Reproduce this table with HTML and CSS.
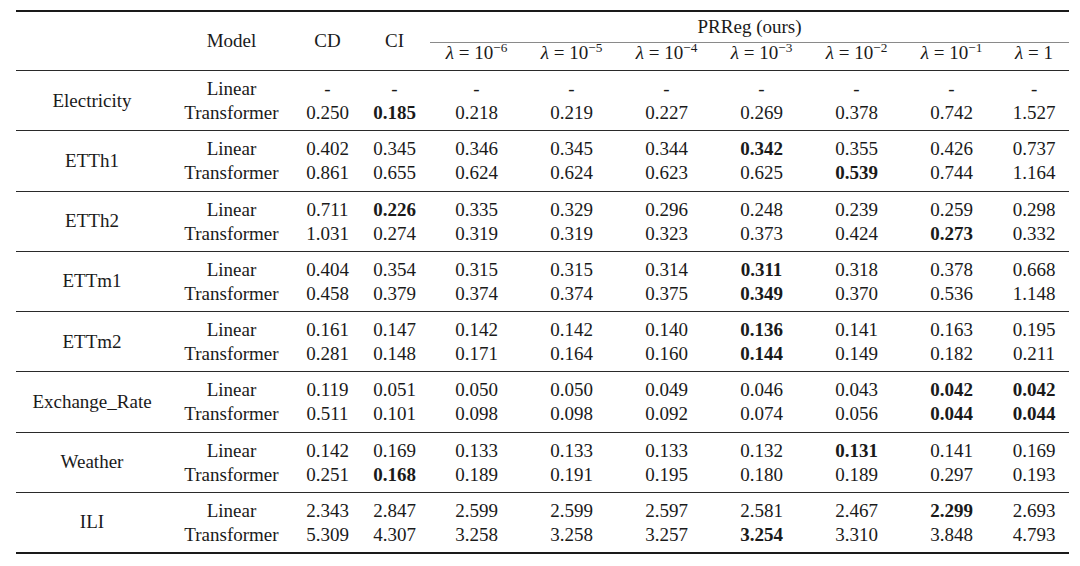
FILE: index.html
```html
<!DOCTYPE html>
<html>
<head>
<meta charset="utf-8">
<link rel="stylesheet" href="styles.css">
</head>
<body>
<table class="results">
  <colgroup>
    <col class="c-ds"><col class="c-model"><col class="c-cd"><col class="c-ci">
    <col class="c-l"><col class="c-l"><col class="c-l"><col class="c-l"><col class="c-l"><col class="c-l"><col class="c-l1">
  </colgroup>
  <thead>
    <tr class="h1">
      <th rowspan="2"></th>
      <th rowspan="2">Model</th>
      <th rowspan="2">CD</th>
      <th rowspan="2">CI</th>
      <th colspan="7" class="group-head"><span class="cmid">PRReg (ours)</span></th>
    </tr>
    <tr class="h2">
      <th><i>λ</i> = 10<sup>−6</sup></th>
      <th><i>λ</i> = 10<sup>−5</sup></th>
      <th><i>λ</i> = 10<sup>−4</sup></th>
      <th><i>λ</i> = 10<sup>−3</sup></th>
      <th><i>λ</i> = 10<sup>−2</sup></th>
      <th><i>λ</i> = 10<sup>−1</sup></th>
      <th><i>λ</i> = 1</th>
    </tr>
  </thead>
  <tbody>
    <tr class="r1"><td rowspan="2" class="ds">Electricity</td><td>Linear</td><td>-</td><td>-</td><td>-</td><td>-</td><td>-</td><td>-</td><td>-</td><td>-</td><td>-</td></tr>
    <tr class="r2"><td>Transformer</td><td>0.250</td><td><b>0.185</b></td><td>0.218</td><td>0.219</td><td>0.227</td><td>0.269</td><td>0.378</td><td>0.742</td><td>1.527</td></tr>
  </tbody>
  <tbody>
    <tr class="r1"><td rowspan="2" class="ds">ETTh1</td><td>Linear</td><td>0.402</td><td>0.345</td><td>0.346</td><td>0.345</td><td>0.344</td><td><b>0.342</b></td><td>0.355</td><td>0.426</td><td>0.737</td></tr>
    <tr class="r2"><td>Transformer</td><td>0.861</td><td>0.655</td><td>0.624</td><td>0.624</td><td>0.623</td><td>0.625</td><td><b>0.539</b></td><td>0.744</td><td>1.164</td></tr>
  </tbody>
  <tbody>
    <tr class="r1"><td rowspan="2" class="ds">ETTh2</td><td>Linear</td><td>0.711</td><td><b>0.226</b></td><td>0.335</td><td>0.329</td><td>0.296</td><td>0.248</td><td>0.239</td><td>0.259</td><td>0.298</td></tr>
    <tr class="r2"><td>Transformer</td><td>1.031</td><td>0.274</td><td>0.319</td><td>0.319</td><td>0.323</td><td>0.373</td><td>0.424</td><td><b>0.273</b></td><td>0.332</td></tr>
  </tbody>
  <tbody>
    <tr class="r1"><td rowspan="2" class="ds">ETTm1</td><td>Linear</td><td>0.404</td><td>0.354</td><td>0.315</td><td>0.315</td><td>0.314</td><td><b>0.311</b></td><td>0.318</td><td>0.378</td><td>0.668</td></tr>
    <tr class="r2"><td>Transformer</td><td>0.458</td><td>0.379</td><td>0.374</td><td>0.374</td><td>0.375</td><td><b>0.349</b></td><td>0.370</td><td>0.536</td><td>1.148</td></tr>
  </tbody>
  <tbody>
    <tr class="r1"><td rowspan="2" class="ds">ETTm2</td><td>Linear</td><td>0.161</td><td>0.147</td><td>0.142</td><td>0.142</td><td>0.140</td><td><b>0.136</b></td><td>0.141</td><td>0.163</td><td>0.195</td></tr>
    <tr class="r2"><td>Transformer</td><td>0.281</td><td>0.148</td><td>0.171</td><td>0.164</td><td>0.160</td><td><b>0.144</b></td><td>0.149</td><td>0.182</td><td>0.211</td></tr>
  </tbody>
  <tbody>
    <tr class="r1"><td rowspan="2" class="ds">Exchange_Rate</td><td>Linear</td><td>0.119</td><td>0.051</td><td>0.050</td><td>0.050</td><td>0.049</td><td>0.046</td><td>0.043</td><td><b>0.042</b></td><td><b>0.042</b></td></tr>
    <tr class="r2"><td>Transformer</td><td>0.511</td><td>0.101</td><td>0.098</td><td>0.098</td><td>0.092</td><td>0.074</td><td>0.056</td><td><b>0.044</b></td><td><b>0.044</b></td></tr>
  </tbody>
  <tbody>
    <tr class="r1"><td rowspan="2" class="ds">Weather</td><td>Linear</td><td>0.142</td><td>0.169</td><td>0.133</td><td>0.133</td><td>0.133</td><td>0.132</td><td><b>0.131</b></td><td>0.141</td><td>0.169</td></tr>
    <tr class="r2"><td>Transformer</td><td>0.251</td><td><b>0.168</b></td><td>0.189</td><td>0.191</td><td>0.195</td><td>0.180</td><td>0.189</td><td>0.297</td><td>0.193</td></tr>
  </tbody>
  <tbody>
    <tr class="r1"><td rowspan="2" class="ds">ILI</td><td>Linear</td><td>2.343</td><td>2.847</td><td>2.599</td><td>2.599</td><td>2.597</td><td>2.581</td><td>2.467</td><td><b>2.299</b></td><td>2.693</td></tr>
    <tr class="r2"><td>Transformer</td><td>5.309</td><td>4.307</td><td>3.258</td><td>3.258</td><td>3.257</td><td><b>3.254</b></td><td>3.310</td><td>3.848</td><td>4.793</td></tr>
  </tbody>
</table>
</body>
</html>
```

FILE: styles.css
```css
html, body {
  margin: 0;
  padding: 0;
  background: #ffffff;
}

body {
  font-family: "Liberation Serif", "Times New Roman", serif;
  font-size: 19px;
  color: #1a1a1a;
}

.results {
  margin: 10px 0 0 16px;
  width: 1053px;
  table-layout: fixed;
  border-collapse: collapse;
  border-top: 2px solid #1a1a1a;
  border-bottom: 2px solid #1a1a1a;
  font-family: "Liberation Serif", "Times New Roman", serif;
  font-size: 19px;
}

.c-ds { width: 152px; }
.c-model { width: 127px; }
.c-cd { width: 65px; }
.c-ci { width: 69px; }
.c-l { width: 95px; }
.c-l1 { width: 70px; }

.results th,
.results td {
  padding: 0;
  text-align: center;
  vertical-align: middle;
  white-space: nowrap;
  font-weight: normal;
  line-height: 24px;
  font-family: "Liberation Serif", "Times New Roman", serif;
}

.h1 th {
  padding-top: 3px;
  padding-bottom: 3px;
}

.h1 .group-head {
  padding-bottom: 0;
}

.cmid {
  display: block;
  margin-left: 1px;
  padding-bottom: 3px;
  border-bottom: 1px solid #8a8a8a;
}

.h2 th {
  line-height: 20px;
  padding-top: 0;
  padding-bottom: 7px;
}

.h2 th i {
  font-style: italic;
}

sup {
  font-size: 0.7em;
  line-height: 0;
  vertical-align: 0.5em;
}

tbody {
  border-top: 1px solid #2a2a2a;
}

.r1 td {
  padding-top: 6px;
}

.r2 td {
  padding-bottom: 5.25px;
}

.results td.ds {
  padding: 0;
}

b {
  font-weight: bold;
}
```
